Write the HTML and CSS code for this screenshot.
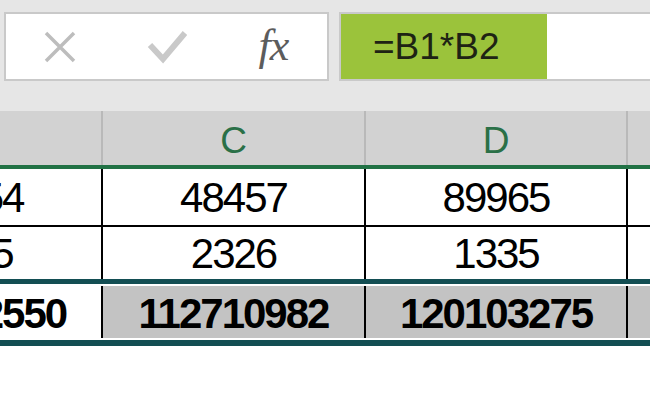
FILE: index.html
```html
<!DOCTYPE html>
<html lang="en">
<head>
    <meta charset="UTF-8">
    <title>Formula bar - B1*B2</title>
    <link rel="stylesheet" href="styles.css">
</head>
<body>
    <div class="formula-bar">
        <div class="bar-tools">
            <span class="tool">
                <svg width="34" height="34" viewBox="0 0 34 34">
                    <path d="M3 3 L31 31 M31 3 L3 31" stroke="#bdbdbd" stroke-width="3.5" fill="none"/>
                </svg>
            </span>
            <span class="tool">
                <svg width="40" height="34" viewBox="0 0 40 34">
                    <polyline points="3,15 16,29 38,3" stroke="#c9c9c9" stroke-width="6" fill="none"/>
                </svg>
            </span>
            <span class="tool tool-fx">fx</span>
        </div>
        <div class="formula-input">
            <span class="formula-text">=B1*B2</span>
        </div>
    </div>

    <div class="sheet">
        <div class="sheet-row col-heads">
            <div class="cell">B</div>
            <div class="cell">C</div>
            <div class="cell">D</div>
            <div class="cell"></div>
        </div>
        <div class="sheet-row row-first">
            <div class="cell">45654</div>
            <div class="cell">48457</div>
            <div class="cell">89965</div>
            <div class="cell"></div>
        </div>
        <div class="sheet-row row-second">
            <div class="cell">2345</div>
            <div class="cell">2326</div>
            <div class="cell">1335</div>
            <div class="cell"></div>
        </div>
        <div class="sheet-row row-total">
            <div class="cell cell-plain">107052550</div>
            <div class="cell">112710982</div>
            <div class="cell">120103275</div>
            <div class="cell"></div>
        </div>
    </div>
</body>
</html>
```

FILE: styles.css
```css
body {
    margin: 0;
    background: #fff;
    font-family: 'Liberation Sans', Arial, sans-serif;
    overflow: hidden;
    width: 650px;
    height: 400px;
}
.formula-bar {
    display: flex;
    gap: 10px;
    height: 111px;
    padding: 12px 0 0 4px;
    box-sizing: border-box;
    background: #e6e6e6;
}
.bar-tools {
    width: 325px;
    height: 69px;
    box-sizing: border-box;
    border: 2px solid #c9c9c9;
    background: #fff;
    display: grid;
    grid-template-columns: repeat(3, 1fr);
    align-items: center;
    justify-items: center;
}
.tool {
    display: flex;
    align-items: center;
    justify-content: center;
}
.tool-fx {
    font-family: 'Liberation Serif', 'Times New Roman', serif;
    font-style: italic;
    font-size: 44px;
    color: #5c5c5c;
    letter-spacing: -1px;
    margin-top: -2px;
}
.formula-input {
    flex: 1;
    height: 69px;
    margin-right: -10px;
    box-sizing: border-box;
    border: 2px solid #c9c9c9;
    background: #fff;
    display: flex;
}
.formula-text {
    width: 206px;
    box-sizing: border-box;
    padding-left: 32px;
    background: #9bc33b;
    color: #1e2314;
    font-size: 37px;
    line-height: 65px;
}
.sheet {
    margin-left: -161px;
}
.sheet-row {
    display: grid;
    grid-template-columns: 264px 263px 262px 262px;
}
.cell {
    box-sizing: border-box;
    border-right: 2px solid #000;
    text-align: center;
    font-size: 42px;
    letter-spacing: -2px;
    color: #000;
}
.col-heads {
    background: #d2d2d2;
    border-bottom: 4px solid #227245;
}
.col-heads .cell {
    height: 54px;
    line-height: 60px;
    border-right-color: #b9b9b9;
    color: #2a7047;
    font-size: 37px;
    letter-spacing: 0;
}
.row-first {
    border-bottom: 2px solid #000;
}
.row-first .cell {
    height: 56px;
    line-height: 58px;
}
.row-second {
    border-bottom: 5px solid #134e53;
}
.row-second .cell {
    height: 52px;
    line-height: 54px;
}
.row-total {
    padding: 2px 0;
    border-bottom: 6px solid #134e53;
}
.row-total .cell {
    height: 52px;
    line-height: 56px;
    font-weight: bold;
    background: #c3c3c3;
}
.row-total .cell-plain {
    background: #fff;
}
```
